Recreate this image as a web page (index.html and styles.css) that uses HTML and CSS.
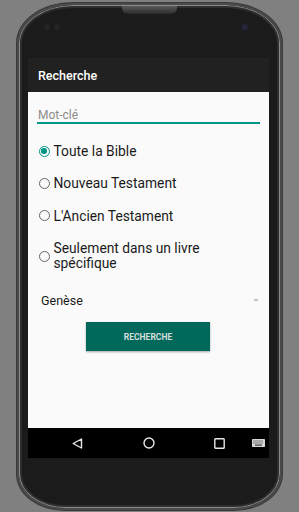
FILE: index.html
```html
<!DOCTYPE html>
<html>
<head>
<meta charset="utf-8">
<link rel="stylesheet" href="styles.css">
</head>
<body>
<div class="phone">
  <div class="speaker"></div>
  <div class="sensor s1"></div>
  <div class="sensor s2"></div>
  <div class="camera"></div>
  <div class="screen">
    <div class="appbar">Recherche</div>
    <div class="content">
      <div class="field"><span class="hint">Mot-clé</span></div>
      <div class="radios">
        <div class="radio checked"><span class="dot"></span><span class="label">Toute la Bible</span></div>
        <div class="radio"><span class="dot"></span><span class="label">Nouveau Testament</span></div>
        <div class="radio"><span class="dot"></span><span class="label">L'Ancien Testament</span></div>
        <div class="radio tall"><span class="dot"></span><span class="label">Seulement dans un livre<br>spécifique</span></div>
      </div>
      <div class="spinner"><span>Genèse</span><span class="arrow"></span></div>
      <div class="btnrow"><div class="btn">RECHERCHE</div></div>
    </div>
    <div class="navbar">
      <svg class="nav back" width="11" height="11" viewBox="0 0 11 11"><path d="M9.5 1 L1.2 5.5 L9.5 10 Z" fill="none" stroke="#e8e8e8" stroke-width="1.4" stroke-linejoin="round"/></svg>
      <svg class="nav home" width="12" height="12" viewBox="0 0 12 12"><circle cx="6" cy="6" r="5" fill="none" stroke="#e8e8e8" stroke-width="1.4"/></svg>
      <svg class="nav recent" width="11" height="11" viewBox="0 0 11 11"><rect x="0.8" y="0.8" width="9.4" height="9.4" rx="0.8" fill="none" stroke="#e8e8e8" stroke-width="1.4"/></svg>
      <svg class="nav kbd" width="13" height="9" viewBox="0 0 13 9"><rect x="0" y="0" width="13" height="8" rx="0.8" fill="#d8d8d8"/><g fill="#222"><rect x="1.5" y="1.5" width="1" height="1"/><rect x="3.5" y="1.5" width="1" height="1"/><rect x="5.5" y="1.5" width="1" height="1"/><rect x="7.5" y="1.5" width="1" height="1"/><rect x="9.5" y="1.5" width="1" height="1"/><rect x="1.5" y="3.5" width="1" height="1"/><rect x="3.5" y="3.5" width="1" height="1"/><rect x="5.5" y="3.5" width="1" height="1"/><rect x="7.5" y="3.5" width="1" height="1"/><rect x="9.5" y="3.5" width="1" height="1"/><rect x="3" y="5.6" width="7" height="1"/></g></svg>
    </div>
  </div>
</div>
</body>
</html>
```
FILE: styles.css
```css
html, body {
  margin: 0;
  padding: 0;
}
body {
  background: #808080;
  width: 299px;
  height: 512px;
  overflow: hidden;
  font-family: Roboto, "Liberation Sans", sans-serif;
}
.phone {
  position: relative;
  margin: 3px 0 0 17px;
  width: 261px;
  height: 503px;
  border: 2px solid #4a4a4a;
  border-radius: 56px 56px 48px 48px / 40px 40px 36px 36px;
  background: #1b1b1b;
  box-shadow: inset 0 0 0 1px #8a8a8a, inset 0 0 0 3px #2e2e2e, 0 0 0 1px #3a3a3a;
}
.speaker {
  position: absolute;
  left: 103px;
  top: 1px;
  width: 55px;
  height: 8px;
  background: linear-gradient(#5a5a5a, #2a2a2a);
  border-radius: 0 0 6px 6px;
}
.sensor {
  position: absolute;
  top: 19px;
  width: 6px;
  height: 6px;
  border-radius: 50%;
  background: #242424;
}
.s1 { left: 25px; }
.s2 { left: 35px; }
.camera {
  position: absolute;
  left: 222px;
  top: 18px;
  width: 8px;
  height: 8px;
  border-radius: 50%;
  background: radial-gradient(circle, #2a2a48 0, #1d1d2a 60%, #222 100%);
}
.screen {
  margin: 53px 0 0 9px;
  width: 241px;
}
.appbar {
  height: 34px;
  background: #212121;
  color: #ffffff;
  font-weight: 500;
  font-size: 12.5px;
  line-height: 36px;
  padding-left: 10px;
  box-sizing: border-box;
}
.content {
  height: 336px;
  background: #fafafa;
  padding: 0 9px 0 9px;
  box-sizing: border-box;
}
.field {
  padding-top: 14px;
  border-bottom: 2px solid #009688;
  line-height: 16px;
  height: 16px;
}
.hint {
  color: #8c8c8c;
  font-size: 12px;
  padding-left: 1px;
}
.radios {
  margin-top: 11px;
}
.radio {
  display: flex;
  align-items: center;
  height: 32px;
  color: #1a1a1a;
  font-size: 13.8px;
}
.radio:nth-child(3) { height: 33px; }
.radio.tall {
  height: auto;
  padding: 9px 0 10px;
  line-height: 15px;
}
.dot {
  flex: none;
  width: 9px;
  height: 9px;
  border: 1.6px solid #666;
  border-radius: 50%;
  margin: 0 4px 0 1.5px;
  position: relative;
}
.checked .dot {
  border-color: #009688;
}
.checked .dot::after {
  content: "";
  position: absolute;
  left: 1.7px;
  top: 1.7px;
  width: 5.6px;
  height: 5.6px;
  border-radius: 50%;
  background: #009688;
}
.spinner {
  margin-top: 11px;
  display: flex;
  justify-content: space-between;
  align-items: center;
  height: 16px;
  font-size: 12.5px;
  color: #1a1a1a;
  padding-left: 4px;
  padding-right: 0;
}
.arrow {
  width: 0;
  height: 0;
  border-left: 3px solid transparent;
  border-right: 3px solid transparent;
  border-top: 3px solid #c4c4c4;
  margin-right: 1px;
}
.btnrow {
  display: flex;
  justify-content: center;
  margin-top: 14px;
  padding-right: 1px;
}
.btn {
  width: 124px;
  height: 29px;
  background: #00695c;
  color: #d6dedc;
  font-size: 8.5px;
  font-weight: 700;
  line-height: 30px;
  text-align: center;
  box-shadow: 0 1px 2px rgba(0,0,0,0.35);
}
.navbar {
  height: 30px;
  background: #000;
  display: flex;
  align-items: center;
}
.nav { display: block; flex: none; }
.back { margin-left: 44px; }
.home { margin-left: 60px; }
.recent { margin-left: 59px; }
.kbd { margin-left: 27px; }
```
